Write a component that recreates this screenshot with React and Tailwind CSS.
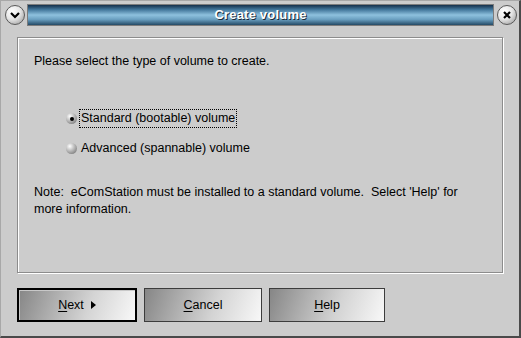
import React from 'react';

function RoundButton({ children }) {
  return (
    <div className="w-[20px] h-[20px] shrink-0 rounded-full border border-[#5a5a5a] bg-[radial-gradient(circle_at_35%_30%,#ffffff_0%,#e6e6e6_45%,#a8a8a8_85%,#7a7a7a_100%)] flex items-center justify-center">
      {children}
    </div>
  );
}

function Radio({ checked }) {
  return (
    <span className="w-[11px] h-[11px] shrink-0 rounded-full bg-[radial-gradient(circle_at_35%_30%,#ffffff_0%,#cfcfcf_30%,#8a8a8a_75%,#5c5c5c_100%)] flex items-center justify-center">
      {checked && <span className="w-[4px] h-[4px] rounded-full bg-black" />}
    </span>
  );
}

function Button({ label, rest, width, isDefault, arrow }) {
  return (
    <button
      className={`h-[34px] ${width} flex items-center justify-center text-[12.5px] text-black bg-[linear-gradient(110deg,#868686_0%,#b4b4b4_35%,#d4d4d4_60%,#f8f8f8_100%)] ${
        isDefault ? 'border-2 border-black shadow-[inset_1px_1px_0_#c8c8c8]' : 'border border-[#3c3c3c]'
      }`}
    >
      <span className="underline underline-offset-2">{label}</span>
      <span>{rest}</span>
      {arrow && (
        <svg width="5" height="8" viewBox="0 0 5 8" className="ml-[7px]">
          <path d="M0 0 L5 4 L0 8 Z" fill="#000" />
        </svg>
      )}
    </button>
  );
}

export default function App() {
  return (
    <div className="w-[521px] h-[338px] bg-[#cccccc] border-l border-t border-[#a8a8a8] border-r-2 border-b-2 border-r-[#4a4a4a] border-b-[#4a4a4a] font-['Liberation_Sans',Arial,sans-serif] flex flex-col overflow-hidden">
      {/* title bar */}
      <div className="flex items-center pt-[3px] pl-[4px] pr-[2px] gap-[1px]">
        <RoundButton>
          <svg width="12" height="12" viewBox="0 0 12 12">
            <path d="M2 4 L6 8 L10 4" fill="none" stroke="#000" strokeWidth="2.2" />
          </svg>
        </RoundButton>
        <div className="flex-1 ml-[1px] mr-[2px] h-[22px] border border-[#7c7c7c] bg-[linear-gradient(to_bottom,#15304a_0%,#3f7398_22%,#8ec1de_50%,#6a9fc0_72%,#244a66_100%)] flex items-center justify-center">
          <span className="text-white font-bold text-[13px] tracking-[0.2px] [text-shadow:1px_1px_0_#1a2a38]">Create volume</span>
        </div>
        <RoundButton>
          <svg width="10" height="10" viewBox="0 0 10 10">
            <path d="M2 2 L8 8 M8 2 L2 8" fill="none" stroke="#000" strokeWidth="2.2" />
          </svg>
        </RoundButton>
      </div>

      {/* group panel */}
      <div className="ml-[16px] mr-[16px] mt-[11px] h-[236px] border border-[#8c8c8c] shadow-[inset_1px_1px_0_#ffffff,1px_1px_0_#ffffff] pl-[16px] pt-[15px] text-[12.5px] text-black leading-[17px]">
        <p>Please select the type of volume to create.</p>
        <div className="mt-[39px] ml-[32px] flex flex-col gap-[11px]">
          <div className="flex items-center h-[19px]">
            <Radio checked />
            <span className="ml-[2px] px-[1px] h-[19px] flex items-center border border-dotted border-black">Standard (bootable) volume</span>
          </div>
          <div className="flex items-center h-[19px]">
            <Radio />
            <span className="ml-[2px] px-[1px] h-[19px] flex items-center border border-transparent">Advanced (spannable) volume</span>
          </div>
        </div>
        <p className="mt-[26px] whitespace-pre">
          {"Note:  eComStation must be installed to a standard volume.  Select 'Help' for\nmore information."}
        </p>
      </div>

      {/* buttons */}
      <div className="flex gap-[7px] ml-[16px] mt-[15px]">
        <Button label="N" rest="ext" width="w-[120px]" isDefault arrow />
        <Button label="C" rest="ancel" width="w-[118px]" />
        <Button label="H" rest="elp" width="w-[116px]" />
      </div>
    </div>
  );
}
